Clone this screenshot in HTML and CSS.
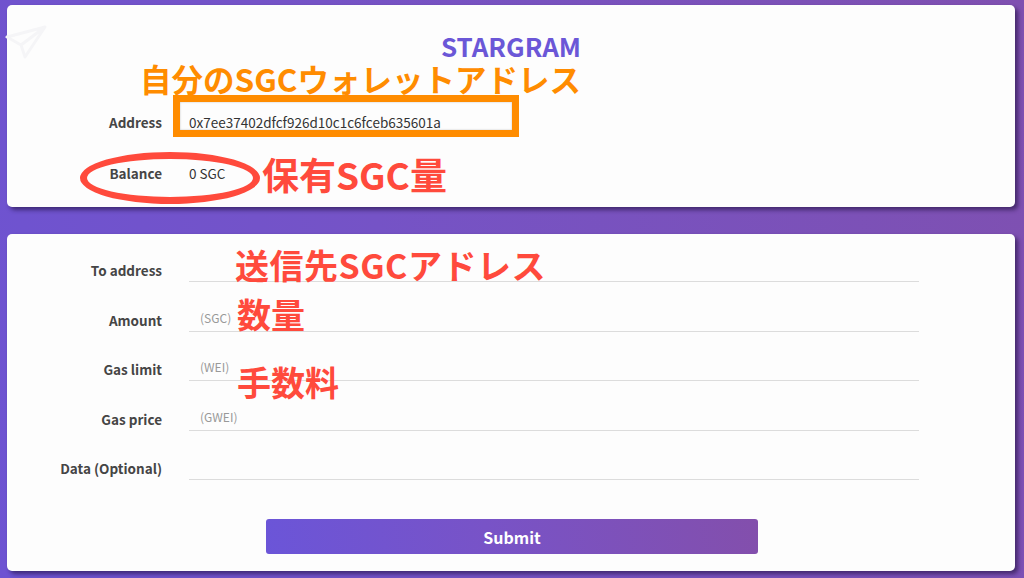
FILE: index.html
```html
<!DOCTYPE html>
<html lang="ja">
<head>
    <meta charset="UTF-8">
    <meta name="viewport" content="width=device-width, initial-scale=1.0">
    <title>STARGRAM Wallet</title>
    <link rel="stylesheet" href="styles.css">
</head>
<body>
    <div class="page">
        <section class="card wallet">
            <svg class="logo" width="44" height="40" viewBox="0 0 44 40">
                <path d="M2 14 L40 4 L20 34 L16 22 Z M16 22 L40 4" fill="none" stroke="#f5f5f7" stroke-width="3" stroke-linejoin="round"/>
            </svg>
            <h1 class="brand">STARGRAM</h1>
            <div class="row">
                <span class="label">Address</span>
                <span class="value">0x7ee37402dfcf926d10c1c6fceb635601a</span>
            </div>
            <div class="row">
                <span class="label">Balance</span>
                <span class="value">0 SGC</span>
            </div>

            <div class="note note-orange note-wallet">自分のSGCウォレットアドレス</div>
            <div class="mark-box"></div>
            <div class="mark-ellipse"></div>
            <div class="note note-red note-balance">保有SGC量</div>
        </section>

        <section class="card send">
            <form class="send-form">
                <label class="field">
                    <span class="label">To address</span>
                    <input type="text">
                </label>
                <label class="field">
                    <span class="label">Amount</span>
                    <input type="text" placeholder="(SGC)">
                </label>
                <label class="field">
                    <span class="label">Gas limit</span>
                    <input type="text" placeholder="(WEI)">
                </label>
                <label class="field">
                    <span class="label">Gas price</span>
                    <input type="text" placeholder="(GWEI)">
                </label>
                <label class="field">
                    <span class="label">Data (Optional)</span>
                    <input type="text">
                </label>
                <button type="submit">Submit</button>
            </form>

            <div class="note note-red note-to">送信先SGCアドレス</div>
            <div class="note note-red note-amount">数量</div>
            <div class="note note-red note-fee">手数料</div>
        </section>
    </div>
</body>
</html>
```

FILE: styles.css
```css
* {
    box-sizing: border-box;
}
html, body {
    margin: 0;
    height: 100%;
}
body {
    font-family: "Noto Sans CJK JP", "Noto Sans", sans-serif;
    background: linear-gradient(75deg, #6d53d2 0%, #7553c6 40%, #7f50b0 100%);
    color: #333;
}
.page {
    display: flex;
    flex-direction: column;
    gap: 27px;
    padding: 5px 9px 7px 7px;
}
.card {
    position: relative;
    background: #fdfdfd;
    border-radius: 5px;
    box-shadow: 3px 3px 4px rgba(30, 15, 60, 0.6);
}
.wallet {
    height: 202px;
    padding-top: 29px;
}
.logo {
    position: absolute;
    left: -2px;
    top: 18px;
}
.brand {
    margin: 0;
    text-align: center;
    font-size: 26px;
    line-height: 24px;
    font-weight: 700;
    color: #6b57d7;
}
.row {
    display: grid;
    grid-template-columns: 155px 1fr;
    column-gap: 27px;
    align-items: center;
    height: 51px;
}
.wallet .row:first-of-type {
    margin-top: 38px;
}
.label {
    text-align: right;
    font-size: 13.5px;
    font-weight: 700;
    color: #454545;
}
.value {
    font-size: 13.5px;
    color: #333;
}

/* form */
.send {
    padding: 16px 0 17px;
}
.send-form {
    display: flex;
    flex-direction: column;
    gap: 17.5px;
}
.field {
    display: grid;
    grid-template-columns: 155px 730px;
    column-gap: 27px;
    height: 32px;
}
.field .label {
    line-height: 24px;
    padding-top: 8px;
}
.field input {
    height: 32px;
    border: none;
    border-bottom: 1px solid #dcdcdc;
    background: transparent;
    padding: 8px 11px 4px;
    font-family: inherit;
    font-size: 12px;
    color: #333;
    outline: none;
}
.field input::placeholder {
    color: #999;
}
button {
    align-self: center;
    width: 492px;
    height: 35px;
    margin-top: 21.5px;
    margin-left: 2px;
    border: none;
    border-radius: 3px;
    background: linear-gradient(80deg, #6b55d8 0%, #7853c7 45%, #834fac 100%);
    color: #fff;
    font-family: inherit;
    font-size: 16px;
    font-weight: 700;
    cursor: pointer;
}

/* annotations over the screenshot */
.note {
    position: absolute;
    font-weight: 700;
    line-height: 1;
    white-space: nowrap;
}
.note-orange {
    color: #ff8c00;
}
.note-red {
    color: #ff4a3c;
}
.note-wallet {
    left: 133px;
    top: 58px;
    font-size: 31.5px;
}
.note-balance {
    left: 255px;
    top: 151px;
    font-size: 37px;
}
.mark-box {
    position: absolute;
    left: 166px;
    top: 90px;
    width: 346px;
    height: 42px;
    border: 7px solid #ff8c00;
    box-shadow: inset 0 0 2px rgba(0, 0, 0, 0.25);
}
.mark-ellipse {
    position: absolute;
    left: 73px;
    top: 147px;
    width: 180px;
    height: 52px;
    border: 7px solid #ff4a3c;
    border-radius: 50%;
}
.note-to {
    left: 228px;
    top: 14px;
    font-size: 34px;
    letter-spacing: 0.5px;
}
.note-amount {
    left: 230px;
    top: 63px;
    font-size: 34px;
}
.note-fee {
    left: 230px;
    top: 131px;
    font-size: 34px;
}
```
